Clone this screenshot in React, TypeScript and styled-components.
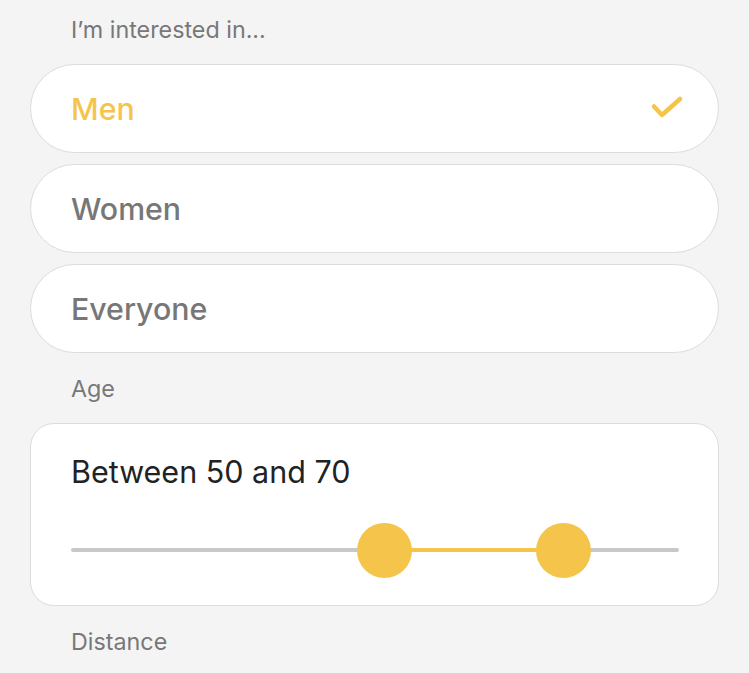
import React from "react";
import styled, { createGlobalStyle } from "styled-components";

const Global = createGlobalStyle`
  html, body { margin: 0; padding: 0; background: #f4f4f4; }
  body { font-family: Inter, "Noto Sans", sans-serif; -webkit-font-smoothing: antialiased; }
`;

const YELLOW = "#f5c54b";

const Page = styled.div`
  display: flex;
  flex-direction: column;
  padding: 0 30px;
  width: 749px;
  box-sizing: border-box;
`;

const SectionLabel = styled.div<{ $first?: boolean }>`
  height: ${(p) => (p.$first ? 64 : 70)}px;
  padding: 0 0 ${(p) => (p.$first ? 6 : 0)}px 41px;
  box-sizing: border-box;
  display: flex;
  align-items: center;
  font-size: 23.3px;
  color: #787878;
`;

const Options = styled.div`
  display: flex;
  flex-direction: column;
  gap: 11px;
`;

const Option = styled.div<{ $selected?: boolean }>`
  height: 89px;
  box-sizing: border-box;
  border: 1px solid #dcdcdc;
  border-radius: 45px;
  background: #fff;
  display: flex;
  align-items: center;
  justify-content: space-between;
  padding: 0 32px 0 40px;
  font-size: 30.3px;
  font-weight: 500;
  color: ${(p) => (p.$selected ? YELLOW : "#777")};
`;

const Card = styled.div`
  height: 183px;
  box-sizing: border-box;
  border: 1px solid #dcdcdc;
  border-radius: 24px;
  background: #fff;
  display: flex;
  flex-direction: column;
  padding: 27px 39px 0 40px;
`;

const CardTitle = styled.div`
  font-size: 30.5px;
  color: #222;
  line-height: 42px;
`;

const Track = styled.div`
  position: relative;
  margin-top: 55px;
  height: 4px;
  border-radius: 2px;
  background: #c8c8c8;
`;

const Range = styled.div`
  position: absolute;
  top: 0;
  height: 4px;
  background: ${YELLOW};
`;

const Thumb = styled.div`
  position: absolute;
  top: 50%;
  width: 55px;
  height: 55px;
  margin: -27.5px 0 0 -27.5px;
  border-radius: 50%;
  background: ${YELLOW};
`;

const Check = () => (
  <svg width="36" height="28" viewBox="0 0 36 28" fill="none">
    <path
      d="M4 11.5 L12 20 L30 4"
      stroke={YELLOW}
      strokeWidth="4.5"
      strokeLinecap="round"
      strokeLinejoin="round"
    />
  </svg>
);

const MIN = 18;
const MAX = 80;
const TRACK_W = 609;
const THUMB = 55;

const pos = (v: number) =>
  THUMB / 2 + ((v - MIN) / (MAX - MIN)) * (TRACK_W - THUMB);

export default function App() {
  const lo = 50;
  const hi = 70;
  const options = ["Men", "Women", "Everyone"];
  const selected = "Men";
  return (
    <>
      <Global />
      <Page>
        <SectionLabel $first>I’m interested in...</SectionLabel>
        <Options>
          {options.map((o) => (
            <Option key={o} $selected={o === selected}>
              {o}
              {o === selected && <Check />}
            </Option>
          ))}
        </Options>
        <SectionLabel>Age</SectionLabel>
        <Card>
          <CardTitle>
            Between {lo} and {hi}
          </CardTitle>
          <Track>
            <Range style={{ left: pos(lo), width: pos(hi) - pos(lo) }} />
            <Thumb style={{ left: pos(lo) }} />
            <Thumb style={{ left: pos(hi) }} />
          </Track>
        </Card>
        <SectionLabel>Distance</SectionLabel>
      </Page>
    </>
  );
}
